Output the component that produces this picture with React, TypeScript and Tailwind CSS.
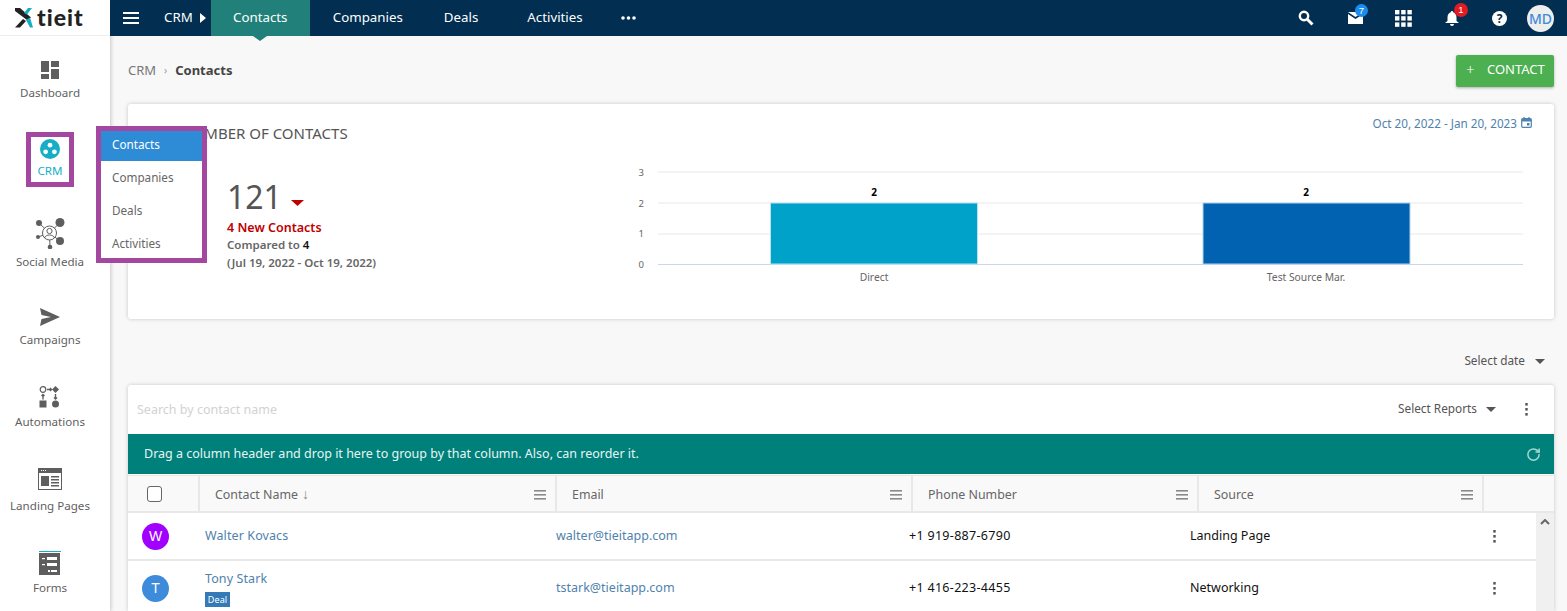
import React from "react";
import { RotateCw } from "lucide-react";

const font = { fontFamily: '"Noto Sans","Open Sans",sans-serif' };

function Nav({ label, icon, h, mt, active }: { label: string; icon: React.ReactNode; h: string; mt: string; active?: boolean }) {
  return (
    <div className={`flex flex-col items-center ${h}`}>
      <div className="h-[24px] flex items-center justify-center">{icon}</div>
      <div className={`text-[11.6px] leading-[16px] ${mt} ${active ? "text-[#16aec6]" : "text-[#5f5f5f]"}`}>{label}</div>
    </div>
  );
}

const G = "#5e5e5e";
const DashIcon = () => (
  <svg width="20" height="20" viewBox="0 0 20 20" fill={G}><rect x="1" y="1" width="8" height="11" /><rect x="11" y="1" width="8" height="6" /><rect x="1" y="14" width="8" height="5" /><rect x="11" y="9" width="8" height="10" /></svg>
);
const CrmIcon = () => (
  <svg width="20" height="20" viewBox="0 0 20 20"><circle cx="10" cy="10" r="10" fill="#16aec6" /><circle cx="10" cy="6.2" r="2.4" fill="#fff" /><circle cx="5.6" cy="12.8" r="2.4" fill="#fff" /><circle cx="14.4" cy="12.8" r="2.4" fill="#fff" /></svg>
);
const SocialIcon = () => (
  <svg width="30" height="32" viewBox="0 0 30 32" fill={G} stroke={G}>
    <g strokeWidth="1"><line x1="14.5" y1="16" x2="4" y2="6" /><line x1="14.5" y1="16" x2="25" y2="5.5" /><line x1="14.5" y1="16" x2="3" y2="20" /><line x1="14.5" y1="16" x2="25" y2="24" /><line x1="14.5" y1="16" x2="15" y2="30" /></g>
    <circle cx="4" cy="6" r="3" stroke="none" /><circle cx="25" cy="5.5" r="4.5" stroke="none" /><circle cx="3" cy="20" r="2" stroke="none" /><circle cx="25" cy="24" r="4" stroke="none" /><circle cx="15" cy="30" r="2.3" stroke="none" />
    <circle cx="14.5" cy="16" r="7" fill="#fff" strokeWidth="1" /><circle cx="14.5" cy="14" r="2.6" fill="#fff" strokeWidth="1" /><path d="M9.5 21c1-4 9-4 10 0" fill="none" strokeWidth="1" />
  </svg>
);
const SendIcon = () => (
  <svg width="20" height="18" viewBox="0 0 20 18" fill={G}><path d="M0 0L20 9L0 18L1.5 11L11 9L1.5 7Z" /></svg>
);
const AutoIcon = () => (
  <svg width="24" height="24" viewBox="0 0 24 24" fill={G} stroke={G}>
    <circle cx="5" cy="4.5" r="2.8" fill="#fff" strokeWidth="1.2" /><path d="M17.5 1l3.5 3.5-3.5 3.5-3.5-3.5z" stroke="none" />
    <path d="M9 4.5h4.5M12 3l1.5 1.5L12 6" strokeWidth="1.4" fill="none" /><path d="M17.5 9v5M16 12.5l1.5 1.5 1.5-1.5" strokeWidth="1.4" fill="none" /><path d="M5 14.5v-5M3.5 11L5 9.5 6.5 11" strokeWidth="1.4" fill="none" />
    <rect x="1.5" y="15.5" width="7" height="7" stroke="none" /><circle cx="17.5" cy="19" r="3.5" stroke="none" />
  </svg>
);
const LandingIcon = () => (
  <svg width="24" height="22" viewBox="0 0 24 22" fill={G}>
    <rect x=".5" y=".5" width="23" height="21" fill="#fff" stroke={G} /><rect width="24" height="5" />
    <rect x="3" y="2" width="1" height="1" fill="#fff" /><rect x="5" y="2" width="1" height="1" fill="#fff" /><rect x="7" y="2" width="1" height="1" fill="#fff" />
    <rect x="3" y="8" width="8" height="10" /><rect x="13" y="8" width="8" height="1.5" /><rect x="13" y="11" width="8" height="1.5" /><rect x="13" y="14" width="8" height="1.5" /><rect x="13" y="17" width="8" height="1.5" />
  </svg>
);
const FormsIcon = () => (
  <svg width="22" height="24" viewBox="0 0 22 24">
    <rect x="0" y="0" width="22" height="1" fill="#16aec6" /><rect x="0" y="2" width="21" height="22" fill={G} />
    <rect x="3" y="7" width="3" height="1.2" fill="#fff" /><rect x="8" y="6" width="10" height="3" fill="#fff" />
    <rect x="3" y="13" width="3" height="1.2" fill="#fff" /><rect x="8" y="12" width="10" height="3" fill="#fff" />
    <rect x="9" y="19" width="2" height="2" fill="#fff" /><rect x="12" y="19" width="6" height="2" fill="#fff" />
  </svg>
);

const Lines = () => (
  <svg width="12" height="10" viewBox="0 0 12 10" fill="#8a8a8a"><rect width="12" height="1.6" y="0" /><rect width="12" height="1.6" y="4" /><rect width="12" height="1.6" y="8" /></svg>
);
const Kebab = () => (
  <svg width="3" height="13" viewBox="0 0 3 13" fill="#555"><rect width="2.4" height="2.6" x=".3" y="0" /><rect width="2.4" height="2.6" x=".3" y="5" /><rect width="2.4" height="2.6" x=".3" y="10" /></svg>
);
const Caret = ({ c = "#555" }: { c?: string }) => (
  <svg width="10" height="5" viewBox="0 0 10 5" fill={c}><path d="M0 0h10L5 5z" /></svg>
);

function HeadCell({ w, label, arrow }: { w: string; label: string; arrow?: boolean }) {
  return (
    <div className={`${w} h-full flex items-center justify-between border-r-2 border-[#e8e8e8] pl-[15px] pr-[9px] pt-[3px] text-[12.4px] text-[#666]`}>
      <span>{label}{arrow && <span className="text-[#888] text-[14px] leading-none" style={{ fontFamily: '"Liberation Sans",sans-serif' }}> ↓</span>}</span>
      <Lines />
    </div>
  );
}

function Chart() {
  const t = { fontFamily: '"Noto Sans",sans-serif' };
  return (
    <svg width="1426" height="215" viewBox="0 0 1426 215" className="absolute left-0 top-0">
      {[68, 99, 130].map((y) => (<line key={y} x1="530" x2="1395" y1={y} y2={y} stroke="#e6e8ee" />))}
      <line x1="530" x2="1395" y1="160.5" y2="160.5" stroke="#ccd6eb" />
      {[["3", 72], ["2", 103], ["1", 133], ["0", 164]].map(([l, y]) => (
        <text key={l as string} x="516" y={y as number} textAnchor="end" fontSize="9.5" fill="#666" style={t}>{l}</text>
      ))}
      <rect x="642.5" y="99" width="207" height="61" fill="#00a2c9" stroke="#b9e4ef" />
      <rect x="1075" y="99" width="207" height="61" fill="#0062b1" stroke="#b5d2e8" />
      <text x="746" y="92" textAnchor="middle" fontSize="10" fontWeight="700" fill="#000" style={t}>2</text>
      <text x="1178" y="92" textAnchor="middle" fontSize="10" fontWeight="700" fill="#000" style={t}>2</text>
      <text x="746" y="177" textAnchor="middle" fontSize="10.3" fill="#666" style={t}>Direct</text>
      <text x="1178" y="177" textAnchor="middle" fontSize="10.3" fill="#666" style={t}>Test Source Mar.</text>
    </svg>
  );
}

function Row({ h, color, letter, name, deal, email, phone, source, border }: { h: string; color: string; letter: string; name: string; deal?: boolean; email: string; phone: string; source: string; border?: boolean }) {
  return (
    <div className={`${h} flex items-center text-[12.5px] ${border ? "border-b-2 border-[#e8e8e8]" : ""}`}>
      <div className="w-[77px] pl-[14px]">
        <div className={`w-[27px] h-[27px] rounded-full ${color} text-white flex items-center justify-center text-[14px]`} style={{ fontFamily: '"Liberation Sans",sans-serif' }}>{letter}</div>
      </div>
      <div className="w-[351px] text-[#4f82ad] tracking-[0.1px]">
        <div>{name}</div>
        {deal && <div className="mt-[3px] w-[25px] h-[15px] bg-[#337ab7] text-white text-[9px] leading-[15px] text-center">Deal</div>}
      </div>
      <div className="w-[353px] text-[#4f82ad]">{email}</div>
      <div className="w-[281px] text-[#111] tracking-[0.3px]">{phone}</div>
      <div className="w-[303px] text-[#111]">{source}</div>
      <Kebab />
    </div>
  );
}

export default function App() {
  return (
    <div className="relative w-[1567px] h-[611px] overflow-hidden bg-[#f8f8f8] flex" style={font}>
      {/* sidebar */}
      <aside className="w-[110px] shrink-0 bg-white shadow-[1px_0_4px_rgba(0,0,0,0.2)] z-10 flex flex-col">
        <div className="h-[36px] flex items-center pl-[15px] gap-[4px] border-b border-[#eeeeee]">
          <svg width="18" height="20" viewBox="0 0 18 20">
            <path d="M0 0h5l11 9.5-4 2.5L0 3z" fill="#222" />
            <path d="M0 19.5L8 11l3 2-6 6.5z" fill="#222" />
            <path d="M17 0l-5 6.5-3-1.5L13 0z" fill="#16aec6" />
            <path d="M11 12l4-2.5 3 10h-3z" fill="#16aec6" />
          </svg>
          <span className="text-[23px] font-black leading-none text-[#222] tracking-[1px]" style={{ fontFamily: 'Lato,sans-serif' }}>tieit</span>
        </div>
        <div className="pt-[22px] pr-[10px] flex flex-col">
          <Nav h="h-[79px]" mt="mt-[3px]" label="Dashboard" icon={<DashIcon />} />
          <Nav h="h-[80px]" mt="mt-[2px]" label="CRM" active icon={<CrmIcon />} />
          <div className="h-[88px] flex flex-col items-center">
            <SocialIcon />
            <div className="text-[11.6px] leading-[16px] mt-[5px] text-[#5f5f5f]">Social Media</div>
          </div>
          <Nav h="h-[80px]" mt="mt-[3px]" label="Campaigns" icon={<SendIcon />} />
          <Nav h="h-[82px]" mt="mt-[5px]" label="Automations" icon={<AutoIcon />} />
          <Nav h="h-[84px]" mt="mt-[7px]" label="Landing Pages" icon={<LandingIcon />} />
          <Nav h="h-[40px]" mt="mt-[5px]" label="Forms" icon={<FormsIcon />} />
        </div>
      </aside>

      <div className="flex-1 min-w-0 flex flex-col">
        {/* top bar */}
        <header className="relative z-10 h-[36px] bg-[#012e51] flex items-center text-white text-[13.3px]">
          <svg className="ml-[13px]" width="16" height="12" viewBox="0 0 16 12" fill="#fff"><rect width="16" height="2" y="0" /><rect width="16" height="2" y="5" /><rect width="16" height="2" y="10" /></svg>
          <span className="ml-[25px]">CRM</span>
          <svg className="ml-[7px]" width="6" height="10" viewBox="0 0 6 10" fill="#fff"><path d="M0 0l6 5-6 5z" /></svg>
          <div className="relative ml-[5px] w-[99px] h-full bg-[#218079] flex items-center justify-center">
            Contacts
            <div className="absolute left-1/2 -translate-x-1/2 top-full w-0 h-0 border-l-[7px] border-r-[7px] border-t-[5px] border-l-transparent border-r-transparent border-t-[#218079]" />
          </div>
          <span className="ml-[23px]">Companies</span>
          <span className="ml-[41px]">Deals</span>
          <span className="ml-[49px]">Activities</span>
          <svg className="ml-[38px]" width="15" height="4" viewBox="0 0 15 4" fill="#fff"><circle cx="2" cy="2" r="1.8" /><circle cx="7.5" cy="2" r="1.8" /><circle cx="13" cy="2" r="1.8" /></svg>
          <div className="ml-auto flex items-center h-full pr-[13px]">
            <svg className="mr-[34px]" width="16" height="16" viewBox="0 0 16 16" fill="none" stroke="#fff">
              <circle cx="6" cy="6" r="4.2" strokeWidth="2.4" /><path d="M9 9l5.5 5.5" strokeWidth="3" />
            </svg>
            <div className="relative mr-[32px]">
              <svg width="15" height="12" viewBox="0 0 15 12" fill="#fff"><path d="M0 0h15L7.5 5zM0 2l7.5 5L15 2v10H0z" /></svg>
              <div className="absolute -top-[8px] left-[7px] w-[13px] h-[13px] rounded-full bg-[#1a8cf0] text-[9.5px] leading-[13px] text-center" style={{ fontFamily: '"Liberation Sans",sans-serif' }}>7</div>
            </div>
            <svg className="mr-[33px]" width="17" height="17" viewBox="0 0 17 17" fill="#fff">
              {[0, 6.2, 12.4].flatMap((y) => [0, 6.2, 12.4].map((x) => <rect key={`${x}-${y}`} x={x} y={y} width="4.4" height="4.4" />))}
            </svg>
            <div className="relative mr-[33px]">
              <svg width="14" height="15" viewBox="0 0 14 15" fill="#fff"><path d="M7 0a1.2 1.2 0 0 1 1.2 1.3C10.500 2 11.500 4 11.500 6.500V10L14 12H0l2.500-2V6.500C2.500 4 3.500 2 5.800 1.300A1.200 1.200 0 0 1 7 0zM5 13h4a2 2 0 0 1-4 0z" /></svg>
              <div className="absolute -top-[8px] left-[9px] w-[14px] h-[14px] rounded-full bg-[#e01b22] text-[9.5px] leading-[14px] text-center" style={{ fontFamily: '"Liberation Sans",sans-serif' }}>1</div>
            </div>
            <div className="mr-[20px] w-[15px] h-[15px] rounded-full bg-white text-[#012e51] text-[12px] font-bold leading-[15px] text-center">?</div>
            <div className="w-[27px] h-[27px] rounded-full bg-[#eeeeee] text-[#3e8bdc] text-[14px] font-medium flex items-center justify-center">MD</div>
          </div>
        </header>

        {/* content */}
        <main className="pl-[18px] pr-[13px] flex-1 min-h-0 flex flex-col">
          <div className="h-[68px] flex items-center justify-between pt-[1px]">
            <div className="text-[13px] text-[#777] flex items-center">
              <span>CRM</span>
              <span className="mx-[8px] text-[#999] text-[10px]">›</span>
              <span className="font-bold text-[#444]">Contacts</span>
            </div>
            <button className="w-[98px] h-[32px] bg-[#4caf50] text-white rounded-[2px] shadow-[0_1px_3px_rgba(0,0,0,0.3)] flex items-center pl-[10px] pb-[2px] text-[13px]">
              <span className="text-[15px] font-light w-[21px] text-left">+</span>CONTACT
            </button>
          </div>

          <section className="relative h-[215px] bg-white rounded-[3px] shadow-[0_0_4px_rgba(0,0,0,0.2)]">
            <Chart />
            <div className="absolute left-[54px] top-[20px] text-[15px] text-[#555] leading-[18px]">NUMBER OF CONTACTS</div>
            <div className="absolute right-[22px] top-[11px] text-[11.7px] text-[#4f82ad] flex items-center gap-[4px]">
              Oct 20, 2022 - Jan 20, 2023
              <svg className="-mt-[3px]" width="11" height="11" viewBox="0 0 11 11" fill="none" stroke="#4f82ad">
                <rect x=".7" y="1.700" width="9.600" height="8.600" rx="1" strokeWidth="1.200" /><rect x="1" y="2" width="9" height="2.500" fill="#4f82ad" stroke="none" /><rect x="6" y="6" width="2.500" height="2.500" fill="#4f82ad" stroke="none" /><path d="M3 0v2M8 0v2" strokeWidth="1.200" />
              </svg>
            </div>
            <div className="absolute left-[99px] top-[73px]">
              <div className="flex items-center h-[40px]">
                <span className="text-[32px] leading-[40px] text-[#555]">121</span>
                <span className="ml-[9px] mt-[11px]"><svg width="13" height="6" viewBox="0 0 13 6" fill="#c00000"><path d="M0 0h13L6.500 6z" /></svg></span>
              </div>
              <div className="text-[12.5px] leading-[18px] mt-[2px] text-[#c00000] font-semibold">4 New Contacts</div>
              <div className="text-[11.5px] leading-[18px] -mt-[1px] text-[#666] font-semibold">Compared to <span className="text-[#111]">4</span></div>
              <div className="text-[11.5px] leading-[18px] text-[#666] font-semibold">(Jul 19, 2022 - Oct 19, 2022)</div>
            </div>
          </section>

          <div className="h-[66px] flex items-center justify-end pr-[9px] text-[11.8px] text-[#555] pt-[18px]">
            Select date <span className="ml-[10px]"><Caret /></span>
          </div>

          <section className="flex-1 min-h-0 flex flex-col rounded-t-[3px] shadow-[0_0_4px_rgba(0,0,0,0.2)] bg-white">
            <div className="h-[49px] flex items-center pl-[9px] pr-[26px] text-[11.8px] shrink-0">
              <span className="text-[#d2d2d2] text-[12.5px] pt-[2px]">Search by contact name</span>
              <span className="ml-auto text-[#555] pb-[2px]">Select Reports</span>
              <span className="ml-[9px] mr-[29px]"><Caret /></span>
              <Kebab />
            </div>
            <div className="h-[40px] bg-[#00807a] shrink-0 flex items-center justify-between pl-[16px] pr-[13px] text-[12.5px] text-[#e6f5f4]">
              <span>Drag a column header and drop it here to group by that column. Also, can reorder it.</span>
              <RotateCw size={15} strokeWidth={2.4} className="text-[#a6d5d2]" />
            </div>
            <div className="h-[38px] mt-[1px] shrink-0 flex items-center bg-[#f9f9f9] border-b-2 border-t border-[#e8e8e8] pl-[1px]">
              <div className="w-[71px] h-full border-r-2 border-[#e8e8e8] flex items-center pl-[18px]">
                <div className="w-[15px] h-[16px] rounded-[3px] border border-[#666] bg-white" />
              </div>
              <HeadCell w="w-[357px]" label="Contact Name" arrow />
              <HeadCell w="w-[356px]" label="Email" />
              <HeadCell w="w-[286px]" label="Phone Number" />
              <HeadCell w="w-[285px]" label="Source" />
            </div>
            <div className="flex-1 min-h-0 flex">
              <div className="w-[1408px]">
                <Row h="h-[48px]" border color="bg-[#a100ff]" letter="W" name="Walter Kovacs" email="walter@tieitapp.com" phone="+1 919-887-6790" source="Landing Page" />
                <Row h="h-[55px]" color="bg-[#3e8bdc]" letter="T" name="Tony Stark" deal email="tstark@tieitapp.com" phone="+1 416-223-4455" source="Networking" />
              </div>
              <div className="w-[18px] bg-[#f0f0f0] flex justify-center pt-[6px]">
                <svg width="10" height="6" viewBox="0 0 10 6" fill="none" stroke="#666" strokeWidth="2"><path d="M1 5l4-4 4 4" /></svg>
              </div>
            </div>
          </section>
        </main>
      </div>

      {/* annotation boxes & flyout */}
      <div className="absolute z-20 left-[26px] top-[132px] w-[48px] h-[55px] border-[5px] border-[#a347a0]" />
      <div className="absolute z-20 left-[96px] top-[126px] w-[111px] h-[137px] border-[5px] border-[#a347a0] bg-white text-[11.7px] text-[#666]">
        <div className="h-[30px] bg-[#2e8bd6] text-white flex items-center pl-[11px] pb-[2px]">Contacts</div>
        <div className="h-[33px] flex items-center pl-[11px]">Companies</div>
        <div className="h-[33px] flex items-center pl-[11px]">Deals</div>
        <div className="h-[33px] flex items-center pl-[11px]">Activities</div>
      </div>
    </div>
  );
}
